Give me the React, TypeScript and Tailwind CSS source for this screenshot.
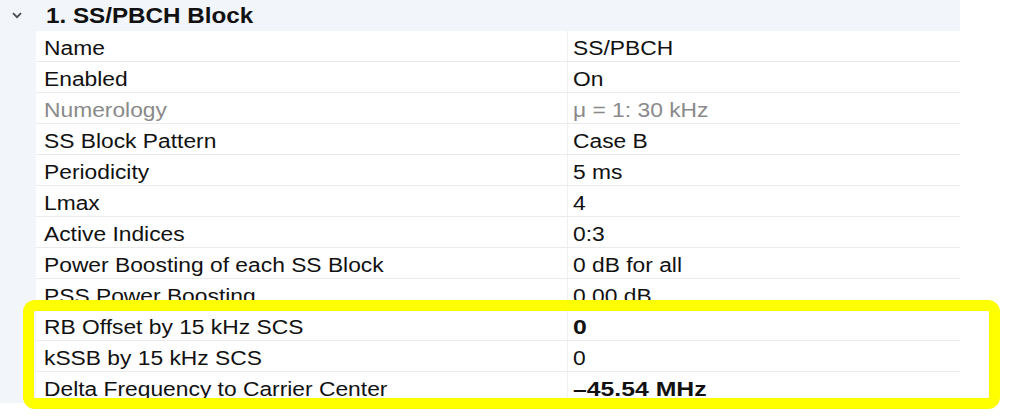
import React from 'react';

type Row = { label: string; value: string; bold?: boolean; muted?: boolean };

const rows: Row[] = [
  { label: 'Name', value: 'SS/PBCH' },
  { label: 'Enabled', value: 'On' },
  { label: 'Numerology', value: 'μ = 1: 30 kHz', muted: true },
  { label: 'SS Block Pattern', value: 'Case B' },
  { label: 'Periodicity', value: '5 ms' },
  { label: 'Lmax', value: '4' },
  { label: 'Active Indices', value: '0:3' },
  { label: 'Power Boosting of each SS Block', value: '0 dB for all' },
  { label: 'PSS Power Boosting', value: '0.00 dB' },
  { label: 'RB Offset by 15 kHz SCS', value: '0', bold: true },
  { label: 'kSSB by 15 kHz SCS', value: '0' },
  { label: 'Delta Frequency to Carrier Center', value: '–45.54 MHz', bold: true },
];

export default function App() {
  return (
    <div
      className="relative w-[1023px] h-[418px] bg-white overflow-hidden"
      style={{ fontFamily: '"Liberation Sans", Arial, sans-serif' }}
    >
      <div className="w-[960px]">
        {/* group header */}
        <div className="h-[31px] bg-[#f2f5fa] flex items-center">
          <div className="w-[33px] flex justify-center pl-[1px]">
            <svg width="10" height="7" viewBox="0 0 10 7" fill="none" stroke="#4a4a4a" strokeWidth="1.8">
              <path d="M1 1.2l4 4 4-4" />
            </svg>
          </div>
          <span className="ml-[13px] inline-block origin-left scale-x-[1.1] text-[22px] font-bold text-[#111] leading-none">
            1. SS/PBCH Block
          </span>
        </div>

        <div className="flex">
          <div className="w-[36px] bg-[#f2f5fa]" />
          <div className="flex-1">
            {rows.map((r) => (
              <div key={r.label} className="grid grid-cols-[531px_1fr] h-[31px] border-b border-[#ebebeb]">
                <div className={`pl-[8px] pt-[4px] text-[20px] leading-[26px] whitespace-nowrap ${r.muted ? 'text-[#8a8a8a]' : 'text-[#111]'}`}>
                  <span className="inline-block origin-left scale-x-[1.14]">{r.label}</span>
                </div>
                <div
                  className={`border-l border-[#f0f0f0] pl-[5px] pt-[4px] leading-[26px] whitespace-nowrap ${
                    r.muted ? 'text-[#8a8a8a]' : 'text-[#111]'
                  } ${r.bold ? 'font-bold text-[21px]' : 'text-[20px]'}`}
                >
                  <span className={`inline-block origin-left ${r.bold ? 'scale-x-[1.18]' : 'scale-x-[1.14]'}`}>{r.value}</span>
                </div>
              </div>
            ))}
          </div>
        </div>
      </div>

      {/* yellow highlight */}
      <div className="absolute left-[23px] top-[300px] w-[977px] h-[109px] border-[11px] border-[#ffff00] rounded-[12px] pointer-events-none" />
    </div>
  );
}
